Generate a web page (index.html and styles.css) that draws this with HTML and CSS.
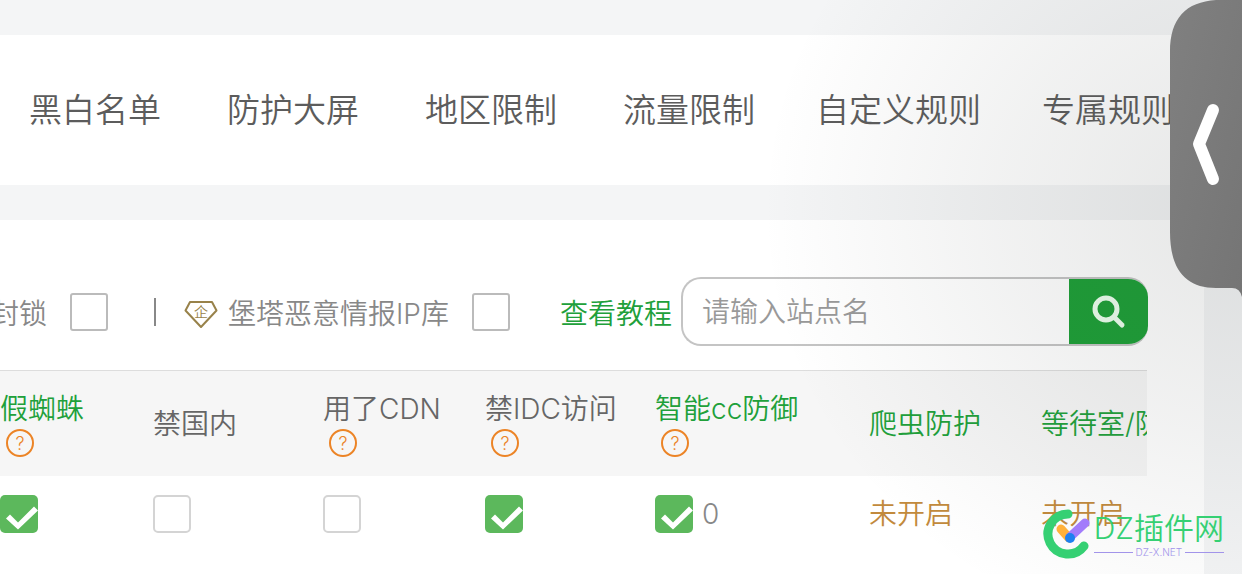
FILE: index.html
```html
<!DOCTYPE html>
<html lang="zh-CN">
<head>
    <meta charset="UTF-8">
    <meta name="viewport" content="width=device-width, initial-scale=1.0">
    <title>站点防护</title>
    <link rel="stylesheet" href="styles.css">
</head>
<body>
    <nav class="tabs">
        <a href="#" class="tab">黑白名单</a>
        <a href="#" class="tab">防护大屏</a>
        <a href="#" class="tab">地区限制</a>
        <a href="#" class="tab">流量限制</a>
        <a href="#" class="tab">自定义规则</a>
        <a href="#" class="tab">专属规则</a>
    </nav>

    <main class="panel">
        <div class="toolbar">
            <label class="option" for="lock">封锁</label>
            <input type="checkbox" id="lock" class="box">
            <span class="divider"></span>
            <svg class="badge" viewBox="0 0 34 34" aria-hidden="true">
                <path d="M6 7H28L32.500 15.500L17 32L1.500 15.500Z" fill="none" stroke="#98824a" stroke-width="2" stroke-linejoin="round"/>
                <text x="17" y="22" text-anchor="middle">企</text>
            </svg>
            <label class="option" for="ip-library">堡塔恶意情报IP库</label>
            <input type="checkbox" id="ip-library" class="box box-library">
            <a href="#" class="guide">查看教程</a>
            <form class="search">
                <input type="text" class="search-input" placeholder="请输入站点名" aria-label="请输入站点名">
                <button type="button" class="search-btn" aria-label="搜索">
                    <svg viewBox="0 0 34 34">
                        <circle cx="14" cy="14" r="11"/>
                        <path d="M22 22L30 30"/>
                    </svg>
                </button>
            </form>
        </div>

        <div class="table-wrap">
            <table class="sites">
                <colgroup>
                    <col class="col-spider">
                    <col class="col-switch">
                    <col class="col-cdn">
                    <col class="col-switch">
                    <col class="col-cc">
                    <col class="col-crawler">
                    <col>
                </colgroup>
                <thead>
                    <tr>
                        <th class="green">假蜘蛛<button type="button" class="help">?</button></th>
                        <th>禁国内</th>
                        <th>用了CDN<button type="button" class="help">?</button></th>
                        <th>禁IDC访问<button type="button" class="help">?</button></th>
                        <th class="green">智能cc防御<button type="button" class="help">?</button></th>
                        <th class="green">爬虫防护</th>
                        <th class="green">等待室/防</th>
                    </tr>
                </thead>
                <tbody>
                    <tr>
                        <td><input type="checkbox" class="box rounded" aria-label="假蜘蛛" checked></td>
                        <td><input type="checkbox" class="box rounded" aria-label="禁国内"></td>
                        <td><input type="checkbox" class="box rounded" aria-label="用了CDN"></td>
                        <td><input type="checkbox" class="box rounded" aria-label="禁IDC访问" checked></td>
                        <td>
                            <div class="cc">
                                <input type="checkbox" id="cc" class="box rounded" checked>
                                <label for="cc">0</label>
                            </div>
                        </td>
                        <td><a href="#" class="off">未开启</a></td>
                        <td><a href="#" class="off">未开启</a></td>
                    </tr>
                </tbody>
            </table>
        </div>
    </main>

    <div class="shade"></div>

    <button type="button" class="drawer" aria-label="展开">
        <svg viewBox="0 0 72 300">
            <defs>
                <linearGradient id="drawer-fill" x1="0" y1="0" x2="1" y2="1">
                    <stop offset="0" stop-color="#808080"/>
                    <stop offset="1" stop-color="#757575"/>
                </linearGradient>
            </defs>
            <path d="M72 0H46C16 2 0 18 0 52V232C0 270 16 288 46 288H62Q70 288 72 297Z" fill="url(#drawer-fill)"/>
            <path d="M43 110L29 144L43 179" fill="none" stroke="#fff" stroke-width="12" stroke-linecap="round" stroke-linejoin="round"/>
        </svg>
    </button>

    <div class="brand">
        <svg class="brand-mark" viewBox="0 0 50 52">
            <path d="M26 6A20 20 0 1 0 42 38" fill="none" stroke="#35d073" stroke-width="9" stroke-linecap="round"/>
            <path d="M19 21L27 30" stroke="#ffb13b" stroke-width="9" stroke-linecap="round"/>
            <path d="M28 29L43 15" stroke="#a27cfb" stroke-width="9" stroke-linecap="round"/>
            <circle cx="28" cy="30" r="5" fill="#1d80f0"/>
        </svg>
        <div>
            <div class="brand-name">DZ插件网</div>
            <div class="brand-site">DZ-X.NET</div>
        </div>
    </div>
</body>
</html>
```

FILE: styles.css
```css
* {
    box-sizing: border-box;
}

body {
    font-family: Inter, "Noto Sans CJK SC", sans-serif;
    font-weight: 350;
    font-size: 28px;
    line-height: 36px;
    margin: 0;
    padding-top: 35px;
    background-color: #f4f5f6;
    color: #666;
    display: flex;
    flex-direction: column;
    gap: 35px;
    min-height: 100vh;
    position: relative;
    overflow: hidden;
}

a {
    text-decoration: none;
}

button,
input {
    font: inherit;
    margin: 0;
    padding: 0;
}

/* Tabs */
.tabs {
    display: flex;
    align-items: center;
    height: 150px;
    margin-left: -4px;
    background-color: #fff;
    overflow: hidden;
}

.tab {
    flex: none;
    min-width: 198px;
    padding: 0 28px;
    font-size: 33px;
    text-align: center;
    color: #5c5c5c;
}

/* Panel */
.panel {
    flex: 1;
    margin-right: 38px;
    padding: 57px 56px 0 0;
    background-color: #fff;
}

.toolbar {
    display: flex;
    align-items: center;
    height: 69px;
    margin-bottom: 24px;
    color: #888;
}

.option,
.guide {
    flex: none;
    padding-top: 4px;
    white-space: nowrap;
}

.option:first-child {
    width: 47px;
    margin-right: 23px;
    direction: rtl;
    overflow: hidden;
}

.box {
    appearance: none;
    display: block;
    flex: none;
    width: 38px;
    height: 38px;
    border: 2px solid #bbb;
    border-radius: 3px;
    background-color: #fff;
}

.box.rounded {
    border-color: #d4d4d4;
    border-radius: 5px;
}

.box.rounded:checked {
    border: none;
    background-color: #5cb85c;
}

.box:checked::before {
    content: "";
    display: block;
    height: 100%;
    background-color: #fff;
    clip-path: polygon(6px 24px, 10px 20px, 18px 28px, 34px 12px, 38px 16px, 18px 35px);
}

.box-library {
    margin: 0 50px 0 23px;
}

.divider {
    flex: none;
    width: 2px;
    height: 28px;
    margin: 0 28px 0 46px;
    background-color: #888;
}

.badge {
    flex: none;
    width: 34px;
    height: 34px;
    margin-right: 10px;
}

.badge text {
    font-size: 14px;
    fill: #98824a;
}

.guide {
    color: #20a03a;
    margin-right: 9px;
}

.green {
    color: #20a03a;
}

.search {
    flex: 1;
    display: flex;
    min-width: 0;
    height: 69px;
    border: 2px solid #c4c4c4;
    border-right: none;
    border-radius: 20px;
    overflow: hidden;
}

.search-input {
    flex: 1;
    min-width: 0;
    padding-left: 19px;
    border: none;
    outline: none;
    background: none;
}

.search-input::placeholder {
    color: #999;
}

.search-btn {
    width: 79px;
    border: none;
    background-color: #1c9f36;
}

.search-btn svg {
    display: block;
    width: 34px;
    height: 34px;
    margin: 0 auto;
    fill: none;
    stroke: #ecffee;
    stroke-width: 5;
    stroke-linecap: round;
}

/* Table */
.table-wrap {
    border-top: 1px solid #ddd;
    margin-right: 1px;
    overflow: hidden;
}

.sites {
    width: 100%;
    min-width: 1147px;
    table-layout: fixed;
    border-collapse: collapse;
}

.col-spider {
    width: 153px;
}

.col-switch {
    width: 170px;
}

.col-cdn {
    width: 162px;
}

.col-cc {
    width: 214px;
}

.col-crawler {
    width: 172px;
}

.sites th {
    height: 105px;
    padding: 0;
    background-color: #f6f6f6;
    font-weight: 350;
    text-align: left;
    white-space: nowrap;
}

.sites td {
    height: 75px;
    padding: 0;
}

.help {
    display: block;
    width: 28px;
    height: 28px;
    margin: 2px 0 0 6px;
    border: 2px solid #ec8426;
    border-radius: 50%;
    background: none;
    color: #ec8426;
    font-size: 18px;
    line-height: 26px;
}

.cc {
    display: flex;
    align-items: center;
    gap: 9px;
    color: #888;
}

.off {
    color: #c28a3c;
}

/* Shadow cast by the drawer */
.shade {
    position: absolute;
    inset: 0;
    pointer-events: none;
    background: radial-gradient(ellipse 480px 440px at 100% 210px, rgba(60, 66, 64, 0.13), rgba(60, 66, 64, 0.07) 50%, rgba(60, 66, 64, 0));
}

.drawer {
    position: absolute;
    top: 0;
    right: 0;
    width: 72px;
    height: 300px;
    border: none;
    background: none;
}

.drawer svg {
    display: block;
    width: 72px;
    height: 300px;
}

/* Site mark */
.brand {
    position: absolute;
    right: 18px;
    bottom: 14px;
    display: flex;
    align-items: center;
    gap: 2px;
    color: #35d073;
}

.brand-mark {
    width: 50px;
    height: 52px;
}

.brand-name {
    font-size: 30px;
    white-space: nowrap;
}

.brand-site {
    display: flex;
    align-items: center;
    gap: 3px;
    color: #a294ea;
    font-size: 10px;
    line-height: 12px;
}

.brand-site::before,
.brand-site::after {
    content: "";
    flex: 1;
    height: 1px;
    background-color: #a294ea;
}
```
